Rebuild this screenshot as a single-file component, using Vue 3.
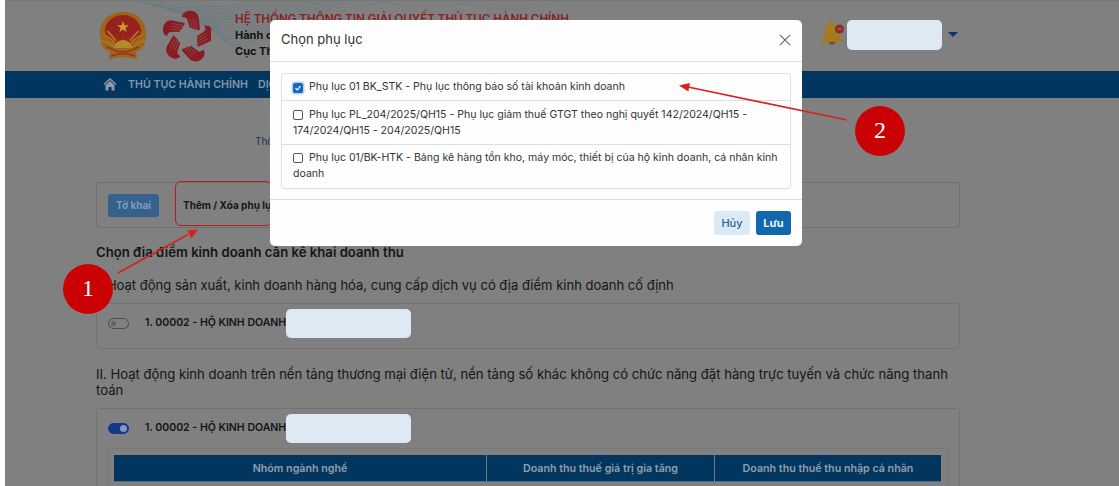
<template>
  <div class="screen">
    <div class="page">
      <header class="site-header">
        <svg class="waves" width="620" height="70" viewBox="0 0 620 70">
          <path v-for="n in 16" :key="n" :d="wavePath(n)" />
          <path class="soft" d="M225 0c30 10 50 8 90-2M300 0c30 8 60 8 95 0M380 0c40 12 70 10 110-2" />
        </svg>
        <svg class="emblem" width="48" height="50" viewBox="0 0 48 50">
          <path class="gold" d="M24 1C11 1 1 9 1 22c0 5 2 8 1 10 1 5 5 7 9 9l-1 8 5-2c6-1 12-1 18 0l5 2-1-8c4-2 8-4 9-9-1-2 1-5 1-10C47 9 37 1 24 1z" />
          <path class="red" d="M24 4C14 4 6 11 6 20c0 4 2 7 5 9l6 5h14l6-5c3-2 5-5 5-9C42 11 34 4 24 4z" />
          <path class="star" d="M24 10l1.500 4.200h4.400l-3.500 2.700 1.300 4.300-3.700-2.600-3.700 2.600 1.300-4.300-3.500-2.700h4.400z" />
          <path class="grain" d="M4 24c5 1 9 4 12 9M44 24c-5 1-9 4-12 9M3 30c6 1 10 4 13 8M45 30c-6 1-10 4-13 8M8 20c4 3 6 6 9 10M40 20c-4 3-6 6-9 10" />
          <path class="wheel" d="M15 37a9 8 0 0 1 18 0z" />
          <path class="band" d="M8 36c4 1 7 3 9 4 4 1 10 1 14 0 2-1 5-3 9-4M12 45c8-3 16-3 24 0M17 24l3 6M31 24l-3 6M24 24v5" />
        </svg>
        <svg class="hands" width="48" height="52" viewBox="0 0 48 52">
          <g v-for="a in [0, 72, 144, 216, 288]" :key="a" :transform="`rotate(${a} 24.500 27)`">
            <path class="palm" d="M19 7.500C19 3 23 .5 28 .8c4.500.4 7.500 3.500 7.800 8l1.200 11-2.200.4-2-1-2 .2-1.800-1.500-2 .1L24 9c-1.500-2-3.500-2-5-1.500z" />
            <path class="gap" d="M26.800 9l2.300 8.500M29.600 8.500l1.900 10.300M32.500 8.500l1.600 11" />
          </g>
        </svg>
        <div class="titles">
          <div class="system-name">HỆ THỐNG THÔNG TIN GIẢI QUYẾT THỦ TỤC HÀNH CHÍNH</div>
          <div>Hành c</div>
          <div>Cục Th</div>
        </div>
        <svg class="bell" width="25" height="28" viewBox="0 0 25 28">
          <g transform="rotate(-4 11 14)">
            <rect class="clapper" x="7.500" y="20.500" width="6" height="5" rx="2" />
            <path class="bell-body" d="M8.500 2h4v3c4.500 1 6 5 6 10 0 3 1 4 3 5v3H.5v-3c2-1 3-3 3-6 0-5 1-8 5-9z" />
          </g>
          <circle class="badge" cx="18.500" cy="10" r="4.500" />
          <path class="badge-mark" d="M16.500 10h4" />
        </svg>
        <div class="user-mask"></div>
        <span class="caret"></span>
      </header>

      <nav class="main-nav">
        <svg class="home" width="14" height="14" viewBox="0 0 14 14">
          <path class="home-body" d="M2.500 8L7 4l4.500 4v5.500H8.500V10h-3v3.500h-3z" />
          <path class="home-roof" d="M1 7.500L7 2l6 5.500" />
        </svg>
        <span>THỦ TỤC HÀNH CHÍNH</span>
        <span class="next">DỊCH VỤ</span>
      </nav>

      <main class="content">
        <div class="breadcrumb">Thông tin</div>

        <div class="tabs">
          <button class="tab-main">Tờ khai</button>
          <span class="tab-link">Thêm / Xóa phụ lục</span>
        </div>

        <h2>Chọn địa điểm kinh doanh cần kê khai doanh thu</h2>
        <p class="group-title first">I. Hoạt động sản xuất, kinh doanh hàng hóa, cung cấp dịch vụ có địa điểm kinh doanh cố định</p>
        <section class="place closed">
          <div class="place-row">
            <span class="switch"></span>
            <span class="place-name">1. 00002 - HỘ KINH DOANH</span>
            <span class="name-mask"></span>
          </div>
        </section>

        <p class="group-title second">
          II. Hoạt động kinh doanh trên nền tảng thương mại điện tử, nền tảng số khác không có chức năng đặt hàng trực tuyến và chức năng thanh<br>
          toán
        </p>
        <section class="place open">
          <div class="place-row">
            <span class="switch on"></span>
            <span class="place-name">1. 00002 - HỘ KINH DOANH</span>
            <span class="name-mask"></span>
          </div>
          <div class="table-wrap">
            <div class="table-head">
              <span v-for="col in columns" :key="col">{{ col }}</span>
            </div>
          </div>
        </section>
      </main>
    </div>

    <div class="highlight"></div>

    <div class="modal">
      <div class="modal-header">
        <h3>Chọn phụ lục</h3>
        <svg class="close" width="12" height="12" viewBox="0 0 12 12">
          <path d="M.800.800l10.400 10.400M11.200.800L.800 11.200" />
        </svg>
      </div>
      <div class="modal-body">
        <div v-for="item in items" :key="item.id" class="item" @click="item.checked = !item.checked">
          <span class="check" :class="{ checked: item.checked }">
            <svg v-if="item.checked" width="8" height="8" viewBox="0 0 8 8"><path d="M1.500 4.200l1.800 1.700 3.200-3.700" /></svg>
          </span>
          <span class="item-line">{{ item.lines[0] }}</span>
          <template v-if="item.lines[1]"><br><span>{{ item.lines[1] }}</span></template>
        </div>
      </div>
      <div class="modal-footer">
        <button class="cancel-btn">Hủy</button>
        <button class="save-btn">Lưu</button>
      </div>
    </div>

    <svg class="arrows" width="1119" height="486" viewBox="0 0 1119 486">
      <path class="line" d="M118 273L188 234.500M847 120L688 87" />
      <path class="tip" d="M198 229.500l-6.500 9-4.500-8zM679 85.500l11-2.500-1.700 8.500z" />
    </svg>
    <div class="step step-one">1</div>
    <div class="step step-two">2</div>
  </div>
</template>

<script setup>
import { ref } from 'vue'

const columns = [
  'Nhóm ngành nghề',
  'Doanh thu thuế giá trị gia tăng',
  'Doanh thu thuế thu nhập cá nhân'
]

const items = ref([
  {
    id: 'stk',
    checked: true,
    lines: ['Phụ lục 01 BK_STK - Phụ lục thông báo số tài khoản kinh doanh']
  },
  {
    id: 'gtgt',
    checked: false,
    lines: [
      'Phụ lục PL_204/2025/QH15 - Phụ lục giảm thuế GTGT theo nghị quyết 142/2024/QH15 -',
      '174/2024/QH15 - 204/2025/QH15'
    ]
  },
  {
    id: 'htk',
    checked: false,
    lines: [
      'Phụ lục 01/BK-HTK - Bảng kê hàng tồn kho, máy móc, thiết bị của hộ kinh doanh, cá nhân kinh',
      'doanh'
    ]
  }
])

// Vân sóng mờ phía sau logo
const wavePath = (n) => {
  const y = n * 3
  return `M${48 + n * 5} -2 C${75 + n * 4} ${8 + y * 0.4}, ${95 + n * 3} ${3 + y * 0.9}, ${125 + n * 2} ${3 + y * 0.9} S${158 + n * 4} ${y * 0.5}, ${160 + n * 7} -4`
}
</script>

<style>
body {
  background: #fefefe;
}
</style>

<style scoped>
.screen {
  position: relative;
  width: 1119px;
  height: 486px;
  overflow: hidden;
  font-family: Inter, "Liberation Sans", sans-serif;
  color: #151515;
}

.screen *,
.screen {
  box-sizing: border-box;
}

button {
  font-family: inherit;
  border: none;
  padding: 0;
}

.page {
  height: 486px;
  margin-left: 5px;
  background: #808080;
  overflow: hidden;
}

/* Header */
.site-header {
  position: relative;
  display: flex;
  align-items: flex-start;
  height: 71px;
  padding-left: 94px;
  border-top: 1px solid #73776f;
}

.waves {
  position: absolute;
  left: 75px;
  top: 0;
  fill: none;
  stroke: #5f7a82;
  stroke-width: 0.8;
  opacity: 0.75;
}

.soft {
  opacity: 0.5;
}

.emblem,
.hands,
.titles {
  position: relative;
  flex-shrink: 0;
}

.emblem {
  margin-top: 10px;
}

.hands {
  margin: 9px 0 0 16px;
}

.gold { fill: #9c651a; }
.red { fill: #96211d; }
.star { fill: #c89b31; }
.grain { fill: none; stroke: #b0701f; stroke-width: 2; }
.wheel { fill: #b28a27; }
.band { fill: none; stroke: #98341b; stroke-width: 1.500; }
.palm { fill: #8b1b22; }
.gap { fill: none; stroke: #8c6b6e; stroke-width: 0.5; }

.titles {
  margin: 10px 0 0 24px;
  width: 340px;
  font-size: 11px;
  font-weight: 700;
  line-height: 16px;
  white-space: nowrap;
  color: #111;
}

.system-name {
  font-size: 11.63px;
  font-weight: 600;
  color: #8b1d21;
}

.bell {
  margin: 18px 0 0 246px;
}

.bell-body { fill: #a57b20; }
.clapper { fill: #8b3f25; }
.badge { fill: #8d2a2a; }
.badge-mark { stroke: #b38080; stroke-width: 1; }

.user-mask {
  width: 95px;
  height: 30px;
  margin: 19px 0 0 1px;
  border-radius: 5px;
  background: #dfe9f4;
}

.caret {
  margin: 31px 0 0 6px;
  border: 5px solid transparent;
  border-top-color: #12316d;
  border-bottom: none;
}

/* Menu */
.main-nav {
  display: flex;
  align-items: center;
  height: 27px;
  padding: 0 0 1px 98px;
  background: #03365f;
  font-size: 10.65px;
  font-weight: 600;
  color: #8196a8;
  white-space: nowrap;
}

.home {
  margin-right: 11px;
}

.home-body { fill: #8e9aa5; }
.home-roof { fill: none; stroke: #8e9aa5; stroke-width: 1.500; }

.next {
  margin-left: 10px;
}

/* Content */
.content {
  width: 864px;
  margin-left: 91px;
}

.breadcrumb {
  height: 84px;
  padding: 36px 0 0 159px;
  font-size: 10px;
  line-height: 14px;
  color: #1c3063;
}

.tabs {
  display: flex;
  align-items: center;
  height: 46px;
  padding-left: 11px;
  border: 1px solid #707070;
  border-radius: 3px;
}

.tab-main {
  width: 51px;
  height: 23px;
  border-radius: 3px;
  background: #35618d;
  color: #7f9db9;
  font-size: 10px;
  font-weight: 700;
}

.tab-link {
  margin-left: 24px;
  font-size: 10px;
  font-weight: 700;
  white-space: nowrap;
}

h2 {
  margin: 15px 0 0;
  font-size: 13.17px;
  font-weight: 600;
  line-height: 18px;
}

.group-title {
  margin: 0;
  font-size: 13.11px;
  line-height: 16px;
  white-space: nowrap;
}

.group-title.first {
  margin: 16px 0 10px;
  font-size: 13.04px;
}

.group-title.second {
  margin: 17px 0 10px;
}

.place {
  border: 1px solid #727272;
  border-radius: 3px;
}

.place.closed {
  height: 46px;
}

.place.open {
  height: 100px;
}

.place-row {
  display: flex;
  align-items: center;
  height: 39px;
  padding-left: 11px;
}

.switch {
  width: 21px;
  height: 11px;
  margin-bottom: 1px;
  padding: 2px;
  border: 1px solid #4d4d4d;
  border-radius: 6px;
}

.switch::before {
  content: '';
  display: block;
  width: 5px;
  height: 5px;
  border-radius: 50%;
  background: #606060;
}

.switch.on {
  padding: 1px;
  border-color: #12388a;
  background: #12388a;
}

.switch.on::before {
  width: 7px;
  height: 7px;
  margin-left: 10px;
  background: #8796b6;
}

.place-name {
  width: 141px;
  margin: 0 0 2px 16px;
  font-size: 10.55px;
  font-weight: 600;
  white-space: nowrap;
}

.name-mask {
  position: relative;
  width: 125px;
  height: 29px;
  border-radius: 5px;
  background: #dfe9f4;
}

.table-wrap {
  height: 60px;
  margin: 0 10px;
  padding: 6px 7px 0 6px;
  border: 1px solid #777;
}

.table-head {
  display: grid;
  grid-template-columns: 372px 228px 1fr;
  height: 27px;
  background: #03365f;
  border-bottom: 1px solid #526d83;
}

.table-head span {
  display: flex;
  align-items: center;
  justify-content: center;
  border-left: 1px solid #64798b;
  font-size: 10.7px;
  font-weight: 600;
  color: #8e9fac;
  white-space: nowrap;
}

.table-head span:first-child {
  border-left: none;
}

/* Modal */
.highlight {
  position: absolute;
  left: 175px;
  top: 181px;
  width: 97px;
  height: 45px;
  border: 1px solid #b51d23;
  border-radius: 6px;
}

.modal {
  position: absolute;
  left: 270px;
  top: 20px;
  width: 532px;
  height: 226px;
  border-radius: 5px;
  background: #fefefe;
  color: #333;
}

.modal-header {
  display: flex;
  align-items: center;
  justify-content: space-between;
  height: 42px;
  padding: 0 11px 2px 11px;
  border-bottom: 1px solid #dedede;
}

.modal-header h3 {
  margin: 0 0 1px;
  font-size: 13px;
  font-weight: 400;
}

.close {
  margin-top: 1px;
  fill: none;
  stroke: #666;
  stroke-width: 1.1;
}

.modal-body {
  margin: 11px 11px 10px;
  border: 1px solid #dfdfdf;
  border-radius: 3px;
}

.item {
  height: 44px;
  padding: 6px 0 0 11px;
  border-bottom: 1px solid #dfdfdf;
  font-size: 10.56px;
  line-height: 16px;
  white-space: nowrap;
}

.item:first-child {
  height: 27px;
  padding-top: 5px;
}

.item:last-child {
  height: 43px;
  padding-top: 5px;
  border-bottom: none;
}

.check {
  display: inline-flex;
  align-items: center;
  justify-content: center;
  width: 10px;
  height: 10px;
  margin-right: 6px;
  border: 1px solid #555;
  border-radius: 2px;
  vertical-align: -2px;
}

.check.checked {
  border-color: #1668c4;
  background: #1668c4;
  box-shadow: 0 0 0 1.5px #b4d2f3;
}

.check path {
  fill: none;
  stroke: #fff;
  stroke-width: 1.2;
}

.modal-footer {
  display: flex;
  justify-content: flex-end;
  gap: 6px;
  padding: 11px 11px 0;
  border-top: 1px solid #dedede;
}

.modal-footer button {
  height: 24px;
  border-radius: 3px;
  font-size: 11px;
}

.cancel-btn {
  width: 36px;
  background: #dceaf6;
  color: #24658f;
  font-weight: 500;
}

.save-btn {
  width: 35px;
  background: #1268ac;
  color: #e8f4ff;
  font-weight: 700;
}

/* Steps */
.arrows {
  position: absolute;
  left: 0;
  top: 0;
  pointer-events: none;
}

.line {
  stroke: #d5231e;
  stroke-width: 1.7;
}

.tip {
  fill: #dc1f1b;
}

.step {
  position: absolute;
  width: 50px;
  height: 50px;
  border-radius: 50%;
  background: #cb0205;
  color: #fff;
  font-family: "Liberation Serif", serif;
  font-size: 24px;
  line-height: 49px;
  text-align: center;
}

.step-one {
  left: 63px;
  top: 264px;
}

.step-two {
  left: 855px;
  top: 106px;
}
</style>
